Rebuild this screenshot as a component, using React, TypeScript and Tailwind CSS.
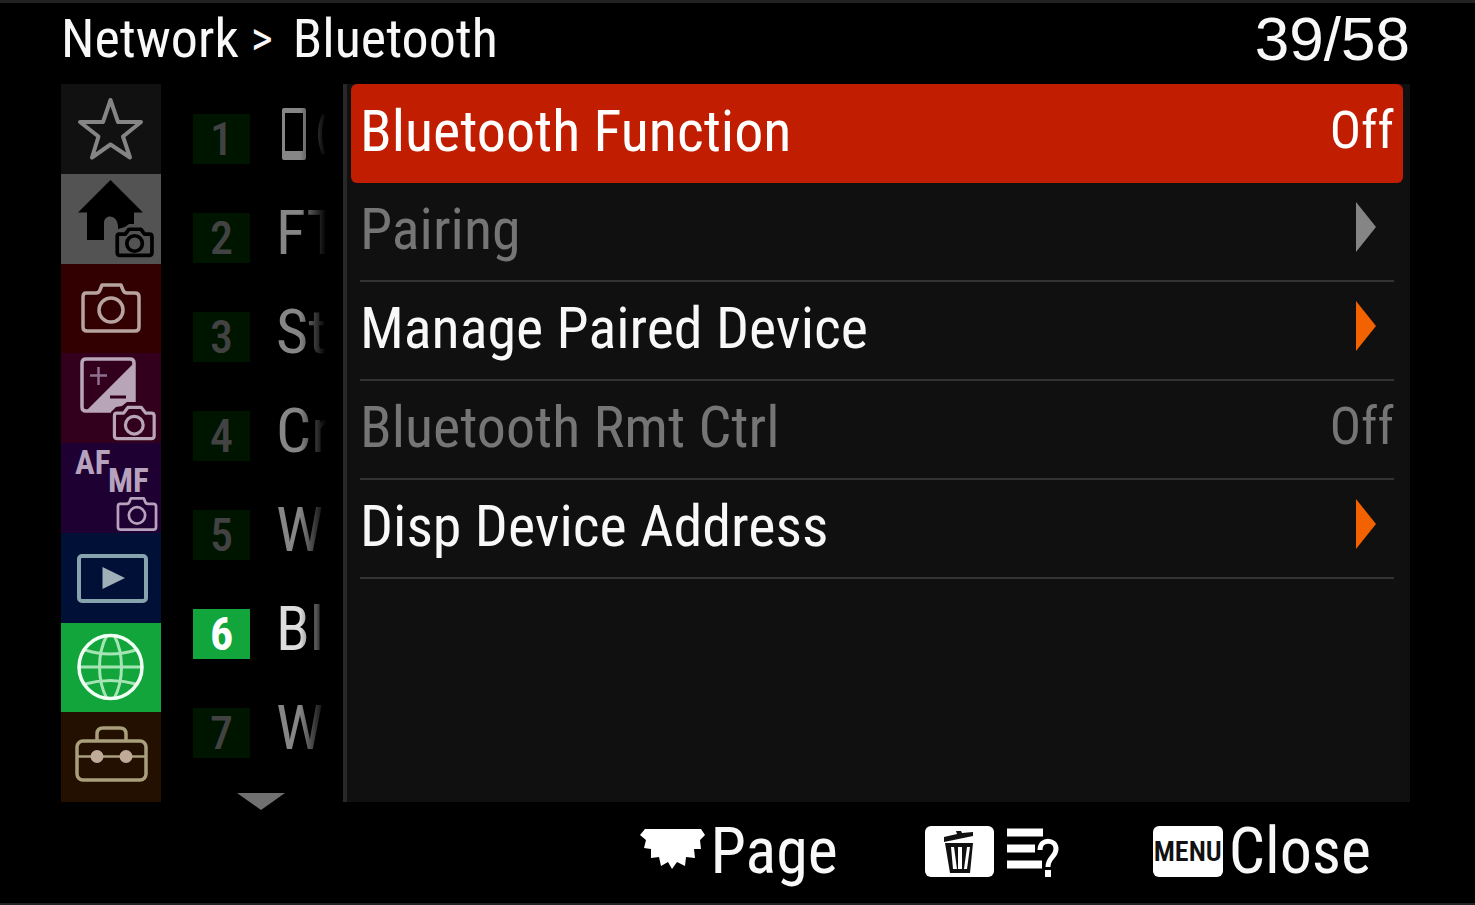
import type { ReactNode } from 'react';

const condensed = "font-['Roboto_Condensed','Roboto',sans-serif]";

function CameraOutline({ className, strokeWidth }: { className: string; strokeWidth: number }) {
  return (
    <svg viewBox="0 0 60 50" className={className} fill="none" stroke="currentColor" strokeWidth={strokeWidth} strokeLinejoin="round">
      <path d="M5 10H15Q18 10 19 7L21 2H40L42 7Q43 10 46 10H54Q58 10 58 14V44Q58 48 54 48H6Q2 48 2 44V14Q2 10 5 10Z" />
      <circle cx="30" cy="27" r="12" />
    </svg>
  );
}

function StarIcon() {
  return (
    <svg viewBox="0 0 100 90" className="h-[90px] w-[100px]" fill="none" stroke="#858585" strokeWidth="4" strokeLinejoin="round">
      <path d="M49.500 16L57 38H80L62 52.500L69 73.500L49.500 60.500L31 73.500L37.500 52.500L19 38H42Z" />
    </svg>
  );
}

function HomeIcon() {
  return (
    <svg viewBox="0 0 100 90" className="h-[90px] w-[100px]">
      <path d="M49.500 6L82 38.500H73V50H68L64 53L57 55V52C56 40 43 40 43 49V66H26V38.500H17Z" fill="#000" />
      <g transform="translate(55 54) scale(0.620)" fill="#535353" stroke="#000" strokeWidth="6" strokeLinejoin="round">
        <path d="M5 10H15L21 2H40L46 10H54Q58 10 58 14V40Q58 44 54 44H6Q2 44 2 40V14Q2 10 5 10Z" />
        <circle cx="30" cy="25" r="12.500" />
      </g>
    </svg>
  );
}

function ExposureIcon() {
  return (
    <svg viewBox="0 0 100 90" className="h-[90px] w-[100px]">
      <path d="M24 59L73 10V49H66L61 53L55 54L50 59Z" fill="#b9a5b8" />
      <path d="M50 58H25Q21 58 21 54V10Q21 6 25 6H69Q73 6 73 10V49" fill="none" stroke="#b9a5b8" strokeWidth="3.500" />
      <path d="M29 22.500H46M37.500 14V32" stroke="#8f708d" strokeWidth="2.500" />
      <path d="M49 44H65" stroke="#32001c" strokeWidth="3" />
      <g transform="translate(52 53) scale(0.710)" fill="#32001c" stroke="#b9a5b8" strokeWidth="4.500" strokeLinejoin="round">
        <path d="M5 10H15L21 2H40L46 10H54Q58 10 58 14V42Q58 46 54 46H6Q2 46 2 42V14Q2 10 5 10Z" />
        <circle cx="30" cy="27" r="12.500" />
      </g>
    </svg>
  );
}

function FocusIcon() {
  return (
    <span className="grid h-[90px] w-[100px] grid-cols-[33px_67px] pl-[14px] text-left text-[33px] leading-[32px] font-bold text-[#b6a2bd]">
      <span className="pt-1">AF</span>
      <span className="pt-[22px]">
        <span className="block h-[32px]">MF</span>
        <CameraOutline className="ml-2 h-[34px] w-[42px]" strokeWidth={4} />
      </span>
    </span>
  );
}

function PlaybackIcon() {
  return (
    <svg viewBox="0 0 100 90" className="h-[90px] w-[100px]">
      <rect x="18" y="23" width="67" height="45" rx="3" fill="none" stroke="#86a3ae" strokeWidth="4" />
      <path d="M41.500 34L64 45L41.500 56Z" fill="#9fb0b8" />
    </svg>
  );
}

function GlobeIcon() {
  return (
    <svg viewBox="0 0 100 90" className="h-[90px] w-[100px]" fill="none" stroke="#a5e5b5" strokeWidth="3">
      <path d="M17 45H82M24 28Q49 36 75 28M24 62Q49 55 75 62M46 13C36 32 36 58 46 77M53 13C63 32 63 58 53 77" />
      <circle cx="49.500" cy="45" r="31.500" stroke="#f2fff5" strokeWidth="3.500" />
    </svg>
  );
}

function ToolboxIcon() {
  return (
    <svg viewBox="0 0 100 90" className="h-[90px] w-[100px]" fill="none" stroke="#a99f7c" strokeWidth="3.500">
      <rect x="16" y="29" width="69" height="39" rx="6" />
      <path d="M36 29V22Q36 16 42 16H59Q65 16 65 22V29" />
      <path d="M16 44.500H85" strokeWidth="2.500" />
      <circle cx="36" cy="44.500" r="6.500" fill="#c0aa98" stroke="none" />
      <circle cx="65" cy="44.500" r="6.500" fill="#c0aa98" stroke="none" />
    </svg>
  );
}

const tabs: { name: string; color: string; icon: ReactNode }[] = [
  { name: 'My Menu', color: 'bg-[#111111]', icon: <StarIcon /> },
  { name: 'Main', color: 'bg-[#535353]', icon: <HomeIcon /> },
  {
    name: 'Shooting',
    color: 'bg-[#320000]',
    icon: <CameraOutline className="h-[50px] w-[60px] text-[#b7a4a0]" strokeWidth={3.5} />,
  },
  { name: 'Exposure/Color', color: 'bg-[#32001c]', icon: <ExposureIcon /> },
  { name: 'Focus', color: 'bg-[#1e0033]', icon: <FocusIcon /> },
  { name: 'Playback', color: 'bg-[#001036]', icon: <PlaybackIcon /> },
  { name: 'Network', color: 'bg-[#11a53b]', icon: <GlobeIcon /> },
  { name: 'Setup', color: 'bg-[#231000]', icon: <ToolboxIcon /> },
];

const pages: { id: number; label: ReactNode }[] = [
  {
    id: 1,
    label: (
      <span className="flex items-center gap-3 pl-[6px]">
        <svg viewBox="0 0 24 52" className="h-[52px] w-6 shrink-0">
          <path d="M2 0H22Q24 0 24 2V50Q24 52 22 52H2Q0 52 0 50V2Q0 0 2 0ZM3 5V43H21V5Z" fill="#868686" fillRule="evenodd" />
        </svg>
        <svg viewBox="0 0 8 52" className="h-[52px] w-2 shrink-0" fill="none" stroke="#868686" strokeWidth="4">
          <path d="M6 7Q-2 26 6 46" />
        </svg>
      </span>
    ),
  },
  { id: 2, label: 'FT' },
  { id: 3, label: 'St' },
  { id: 4, label: 'Cr' },
  { id: 5, label: 'W' },
  { id: 6, label: 'Bl' },
  { id: 7, label: 'W' },
];

const items: { label: string; value?: string; enabled: boolean; selected?: boolean }[] = [
  { label: 'Bluetooth Function', value: 'Off', enabled: true, selected: true },
  { label: 'Pairing', enabled: false },
  { label: 'Manage Paired Device', enabled: true },
  { label: 'Bluetooth Rmt Ctrl', value: 'Off', enabled: false },
  { label: 'Disp Device Address', enabled: true },
];

function MenuItem({ label, value, enabled, selected }: (typeof items)[number]) {
  const color = selected ? 'text-white' : enabled ? 'text-[#f8f8f8]' : 'text-[#757575]';
  return (
    <li className={selected ? 'h-[99px] pr-[7px] pl-1' : 'h-[99px] pr-4 pl-[13px]'}>
      <button
        type="button"
        disabled={!enabled}
        className={`flex h-full w-full items-center justify-between pb-[10px] whitespace-nowrap ${color} ${
          selected ? 'rounded-md bg-[#c11d00] pr-[9px] pl-[9px]' : 'border-b-2 border-[#333333]'
        }`}
      >
        <span className="pt-1 text-[58px] leading-[72px]">{label}</span>
        {value ? (
          <span className="pt-1 text-[52px] leading-[72px]">{value}</span>
        ) : (
          <svg viewBox="0 0 20 50" className={`mr-[18px] h-[50px] w-5 ${enabled ? 'text-[#f26200]' : 'text-[#858585]'}`}>
            <path d="M0 0L20 25L0 50Z" fill="currentColor" />
          </svg>
        )}
      </button>
    </li>
  );
}

export default function App() {
  return (
    <div className={`flex min-h-screen flex-col border-t-[3px] border-b-2 border-[#222222] bg-black text-[#f8f8f8] ${condensed}`}>
      <header className="flex h-[81px] items-center justify-between pr-[65px] pb-[9px] pl-[61px] text-[54px] leading-[72px] whitespace-nowrap">
        <h1 className="flex">
          <span>Network</span>
          <span className="pr-5 pl-3 text-[48px]">&gt;</span>
          <span>Bluetooth</span>
        </h1>
        <p className="font-['Liberation_Sans',sans-serif] text-[62px]">39/58</p>
      </header>

      <main className="flex flex-1 pr-[65px] pl-[61px]">
        <nav aria-label="Categories" className="flex w-[100px] shrink-0 flex-col">
          {tabs.map((tab) => (
            <button
              key={tab.name}
              type="button"
              aria-label={tab.name}
              className={`flex h-0 min-h-[84px] flex-1 items-center justify-center overflow-hidden ${tab.color}`}
            >
              {tab.icon}
            </button>
          ))}
        </nav>

        <nav aria-label="Pages" className="flex h-[718px] w-[182px] shrink-0 flex-col pl-8">
          {pages.map((page) => {
            const current = page.id === 6;
            return (
              <button key={page.id} type="button" className="flex h-[99px] shrink-0 items-center gap-[26px] text-left">
                <span
                  className={`mt-[10px] flex h-[50px] w-[57px] shrink-0 items-center justify-center text-[46px] leading-[50px] ${
                    current ? 'bg-[#11a53b] font-bold text-white' : 'bg-[#001500] font-medium text-[#424242]'
                  }`}
                >
                  {page.id}
                </span>
                <span
                  className={`w-[60px] text-[62px] leading-[72px] whitespace-nowrap [mask-image:linear-gradient(to_right,black_24px,transparent_50px)] ${
                    current ? 'text-[#dddddd]' : 'text-[#868686]'
                  }`}
                >
                  {page.label}
                </span>
              </button>
            );
          })}
          <svg viewBox="0 0 48 17" className="mt-4 ml-11 h-[17px] w-12 shrink-0">
            <path d="M0 0H48L24 17Z" fill="#707070" />
          </svg>
        </nav>

        <ul className="min-w-0 flex-1 border-l-4 border-[#282828] bg-[#101010]">
          {items.map((item) => (
            <MenuItem key={item.label} {...item} />
          ))}
        </ul>
      </main>

      <footer className="flex h-[101px] items-center justify-end pr-[104px] pb-[2px] text-[64px] leading-[72px]">
        <button type="button" className="flex items-center gap-1">
          <svg viewBox="0 0 66 40" className="mb-1.5 h-10 w-[66px]">
            <path d="M5 0H61L65 6L60 11L61 20H54L55 29L46 28L45 37L37 33L32 40L28 33L21 37L19 28L11 29V20L4 19L6 11L0 6Z" fill="#fff" />
          </svg>
          Page
        </button>
        <button type="button" aria-label="Help" className="ml-[87px] flex items-center gap-[13px]">
          <svg viewBox="0 0 69 51" className="h-[51px] w-[69px]">
            <rect width="69" height="51" rx="6" fill="#fff" />
            <path d="M19 11L32 8L31 5H36L37 7L48 6V10L19 16Z" fill="#111" />
            <path d="M20 17H48L45 47H25ZM26 21L28 43H32L29 21ZM33 21V43H37V21ZM42 21L39 43H42L45 21Z" fill="#111" fillRule="evenodd" />
          </svg>
          <svg viewBox="0 0 53 51" className="h-[51px] w-[53px]" fill="none" stroke="#fff">
            <path d="M0 6.500H36M0 22.500H28M0 38.500H35" strokeWidth="8" />
            <path d="M33 24C33 12 49 13 49 23C49 31 41 31 41 41" strokeWidth="5" />
            <path d="M41 44V51" strokeWidth="6" />
          </svg>
        </button>
        <button type="button" className="ml-[93px] flex items-center gap-1.5">
          <span className="flex h-[51px] w-[70px] items-center justify-center rounded-md bg-white text-[28px] leading-[51px] font-semibold text-[#111111]">
            MENU
          </span>
          Close
        </button>
      </footer>
    </div>
  );
}
